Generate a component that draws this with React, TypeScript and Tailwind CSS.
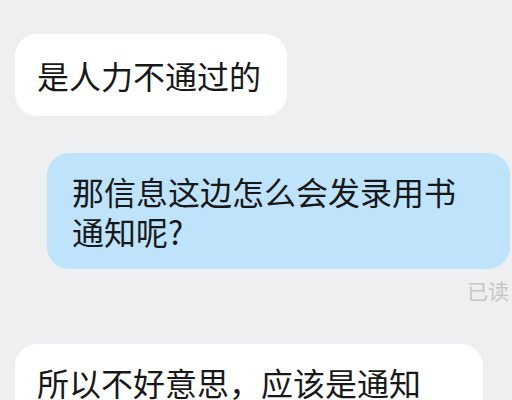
const font = { fontFamily: '"Noto Sans CJK SC", "Noto Sans", sans-serif' };

export default function App() {
  return (
    <div
      className="w-[512px] h-[400px] overflow-hidden bg-[#eeeff1] text-[#17181a]"
      style={font}
    >
      <div className="flex flex-col pt-[34px]">
        <div className="self-start ml-[15px] rounded-[22px] bg-white pl-[22px] pr-[26px] py-[21px] text-[32px] leading-[40px]">
          是人力不通过的
        </div>

        <div className="self-end mr-[2px] mt-[37px] w-[463px] rounded-[22px] bg-[#bfe3fa] pl-[25px] pr-[24px] py-[18px] text-[32px] leading-[40px]">
          那信息这边怎么会发录用书通知呢?
        </div>

        <div className="self-end mr-[3px] mt-[9px] text-[21px] leading-[24px] text-[#c4c5c8]">
          已读
        </div>

        <div className="self-start ml-[15px] mt-[42px] w-[468px] rounded-[22px] bg-white pl-[22px] pr-[24px] py-[18px] text-[32px] leading-[40px]">
          所以不好意思，应该是通知
        </div>
      </div>
    </div>
  );
}
